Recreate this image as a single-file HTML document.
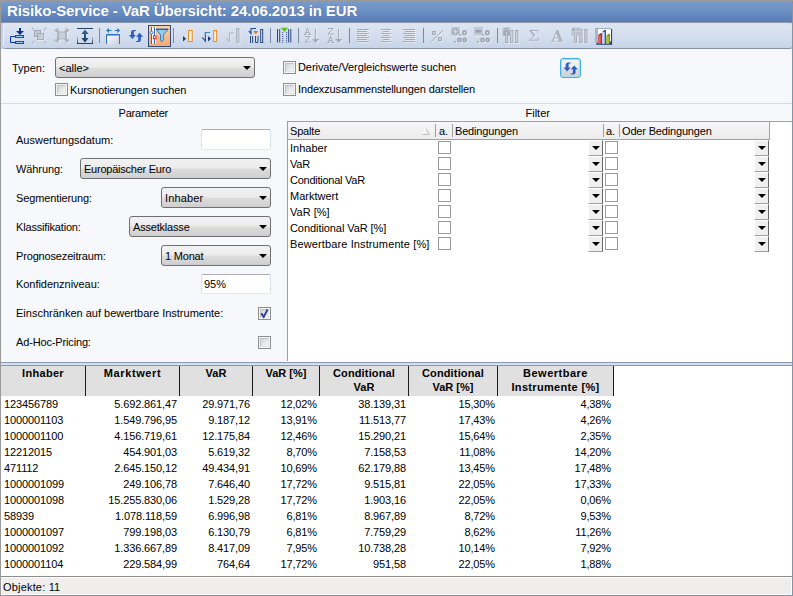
<!DOCTYPE html>
<html>
<head>
<meta charset="utf-8">
<title>Risiko-Service</title>
<style>
*{box-sizing:border-box;margin:0;padding:0}
html,body{width:793px;height:596px;overflow:hidden;background:#f6f8fc}
body{font-family:"Liberation Sans",sans-serif;font-size:11px;color:#000;position:relative}
.abs{position:absolute}
#frame{position:absolute;left:0;top:0;width:793px;height:596px;border-left:1px solid #9a9a9a;border-top:1px solid #9a9a9a}
#title{position:absolute;left:1px;top:1px;width:792px;height:21px;background:linear-gradient(#7b9ccb 0%,#6a8ec2 50%,#577db5 100%);color:#fff;font-weight:bold;font-size:15px;line-height:19px;padding-left:6px;white-space:nowrap;letter-spacing:-.12px;text-shadow:0 0 1px rgba(40,60,110,.5)}
#toolbar{position:absolute;left:1px;top:22px;width:791px;height:27px;background:#c3d0e6;border-top:1px solid #8d96a6}
#toolbar .bar{position:absolute;left:2px;top:0;width:789px;height:25px;border-radius:3px;background:linear-gradient(#dee5f1 0%,#d6dfee 45%,#c7d4e8 100%);border-left:1px solid #eef2f9;box-shadow:0 1px 0 #8591a6}
.lbl{position:absolute;white-space:nowrap;line-height:13px;height:13px}
.combo{position:absolute;height:21px;border:1px solid #707070;border-radius:3px;background:linear-gradient(#f2f2f2 0%,#ebebeb 48%,#dddddd 52%,#cfcfcf 100%);line-height:20px;padding-left:3px;white-space:nowrap}
.combo:after{content:"";position:absolute;right:3px;top:8px;border-left:4px solid transparent;border-right:4px solid transparent;border-top:4px solid #000}
.inp{position:absolute;height:20px;background:#fff;border:1px solid #dde2e9;border-top-color:#abadb3;border-bottom-color:#e3e9ef;border-radius:2px;line-height:18px;padding-left:2px}
.cb{position:absolute;width:13px;height:13px;border:1px solid #8e8f8f;background:#f4f4f4}
.cb i{position:absolute;left:1px;top:1px;width:9px;height:9px;border:1px solid;border-color:#c0c4c9 #e2e4e7 #e2e4e7 #c0c4c9;background:linear-gradient(135deg,#d2d5d9,#f6f6f6)}
.cb svg{position:absolute;left:-1px;top:-1px}
#sep1{position:absolute;left:1px;top:103px;width:792px;height:1px;background:#d5dae3}

#fgrid{position:absolute;left:287px;top:121px;width:506px;height:240px;background:#fff;border-left:1px solid #a0a0a0;border-top:1px solid #a0a0a0}
#fhead{position:absolute;left:0;top:0;width:482px;height:18px;background:linear-gradient(#f7f7f7,#ececec);border-bottom:1px solid #a0a0a0}
#fhead span{position:absolute;top:3px;line-height:13px;white-space:nowrap;letter-spacing:-.17px}
#fhead b{position:absolute;top:2px;width:1px;height:13px;background:#a0a0a0}
.frow{position:absolute;left:2px;white-space:nowrap;line-height:13px}
.gcb{position:absolute;width:13px;height:13px;border:1px solid #9b9b9b;background:#fff}
.dd{position:absolute;width:15px;height:16px;background:#f0f0f0;border-left:1px solid #fff;border-top:1px solid #fff;border-right:1px solid #696969;border-bottom:1px solid #a0a0a0}
.dd:after{content:"";position:absolute;left:3px;top:5px;border-left:4px solid transparent;border-right:4px solid transparent;border-top:4px solid #000}

#split{position:absolute;left:1px;top:361px;width:791px;height:5px;background:linear-gradient(#fff 0,#fff 1px,#8798b0 1px,#8798b0 2px,#d4e0ef 2px,#d4e0ef 4px,#8798b0 4px)}
#bgrid{position:absolute;left:1px;top:366px;width:791px;height:210px;background:#fff;font-size:11px}
#bhead{position:absolute;left:0;top:0;width:613px;height:30px;background:#e0e0e0}
#bhead div{position:absolute;top:0;height:30px;border-right:1px solid #1c1c1c;text-align:center;font-weight:bold;line-height:14px;padding-top:0}
.br{position:absolute;left:0;height:16px;line-height:16px;white-space:nowrap;letter-spacing:-.12px}
.br span{position:absolute;top:0;text-align:right;padding-right:3px}
.br span:first-child{text-align:left;padding-left:3px}
#gbot{position:absolute;left:1px;top:576px;width:791px;height:1px;background:#8c8c8c}
#status{position:absolute;left:1px;top:577px;width:791px;height:18px;background:#f0eeed;border:1px solid #fff;line-height:18px;padding-left:1px;letter-spacing:.18px}
#rb{position:absolute;left:792px;top:1px;width:1px;height:595px;background:#8593a9}
#bb{position:absolute;left:0;top:595px;width:793px;height:1px;background:#8593a9}
#rbtn{position:absolute;left:560px;top:58px;width:21px;height:20px;border:1px solid #3bb0e6;border-radius:3px;background:linear-gradient(#f4f4f4 0%,#ececec 48%,#dedede 52%,#d2d2d2 100%);box-shadow:inset 0 0 0 1px #a6def6}
</style>
</head>
<body>
<div id="frame"></div>
<div id="title">Risiko-Service - VaR Übersicht: 24.06.2013 in EUR</div>
<div id="toolbar"><div class="bar"></div></div>
<svg id="tb" class="abs" style="left:0;top:22px" width="793" height="27" viewBox="0 22 793 27">
<defs>
<linearGradient id="gOr" x1="0" y1="0" x2="0" y2="1"><stop offset="0" stop-color="#fbd3ad"/><stop offset="1" stop-color="#f0a871"/></linearGradient>
<linearGradient id="gBox" x1="0" y1="0" x2="1" y2="1"><stop offset="0" stop-color="#ffffff"/><stop offset="1" stop-color="#c9cedd"/></linearGradient>
<linearGradient id="gNavy" x1="0" y1="0" x2="0" y2="1"><stop offset="0" stop-color="#3a6a9c"/><stop offset="1" stop-color="#173763"/></linearGradient>
<linearGradient id="gSide" x1="0" y1="0" x2="0" y2="1"><stop offset="0" stop-color="#23416d" stop-opacity="0"/><stop offset="1" stop-color="#23416d"/></linearGradient>
<filter id="emb" x="-20%" y="-20%" width="150%" height="150%"><feOffset in="SourceAlpha" dx="1" dy="1" result="o"/><feFlood flood-color="#ffffff" flood-opacity=".4"/><feComposite in2="o" operator="in" result="sh"/><feMerge><feMergeNode in="sh"/><feMergeNode in="SourceGraphic"/></feMerge></filter>
</defs>
<g shape-rendering="crispEdges" fill="#7887a3">
<rect x="99" y="28" width="1" height="15"/><rect x="173" y="28" width="1" height="15"/><rect x="270" y="28" width="1" height="15"/><rect x="298" y="28" width="1" height="15"/><rect x="349" y="28" width="1" height="15"/><rect x="423" y="28" width="1" height="15"/><rect x="497" y="28" width="1" height="15"/>
</g>

<!-- 1: insert below -->
<g>
<path d="M19 28 H21 V31 H24 L20 35 L16 31 H19 Z" fill="#0b2f9e"/>
<rect x="15.5" y="35.5" width="8" height="2" fill="#9ed2f8" stroke="#1146c8"/>
<rect x="15.5" y="41.5" width="8" height="2" fill="#9ed2f8" stroke="#1146c8"/>
<path d="M15 36.5 H10.5 V42.5 H15" fill="none" stroke="#0a32b4"/>
</g>

<!-- 2: disabled overlapping squares -->
<g stroke="#a0a8b6" fill="#c6ccd7" filter="url(#emb)">
<rect x="34.5" y="30.5" width="6" height="6"/>
<rect x="37.5" y="33.5" width="6" height="6" fill-opacity=".75"/>
<path d="M32 28 L34.3 30.3 M46 28 L43.7 30.3 M32 43.2 L34.3 41 M46 43.2 L43.7 41" fill="none" stroke-width="1.2" stroke-dasharray="1.5 .7"/>
</g>

<!-- 3: disabled expand -->
<g fill="#adb5c2" filter="url(#emb)">
<path d="M54 30.5 L58.5 27.8 V30 L60 31.5 H64 L65.5 30 V27.8 L70 30.5 L67 32.5 V38.5 L70 40.5 L65.5 43.2 V41 L64 39.5 H60 L58.5 41 V43.2 L54 40.5 L57 38.5 V32.5 Z"/>
<rect x="59" y="32.5" width="6" height="6" fill="#c9cfd9"/>
</g>

<!-- 4: vertical fit -->
<g>
<rect x="77" y="28" width="16" height="1" fill="#23416d" shape-rendering="crispEdges"/>
<rect x="77" y="43" width="16" height="1" fill="#23416d" shape-rendering="crispEdges"/>
<rect x="77" y="36" width="1" height="7" fill="url(#gSide)"/>
<rect x="92" y="36" width="1" height="7" fill="url(#gSide)"/>
<path d="M85 29.5 L88.6 34 H86 V38 H88.6 L85 42.5 L81.4 38 H84 V34 H81.4 Z" fill="url(#gNavy)"/>
</g>

<!-- 5: column width -->
<g>
<rect x="106.5" y="34.5" width="13" height="10" fill="url(#gBox)"/>
<path d="M106.5 44 V34.5 H119.5 V44" fill="none" stroke="#2b72c2"/>
<rect x="107" y="35" width="12" height="1" fill="#7db4ea"/>
<path d="M106 30.5 L109 28 V30 H111.5 V31 H109 V33 Z M120.2 30.5 L117.2 28 V30 H114.7 V31 H117.2 V33 Z" fill="#2b7acc"/>
</g>

<!-- 6: refresh -->
<g fill="#2b5fc7" stroke="none">
<path d="M136 30 H133.5 C131.8 30 131 31 131 32.5 V35 H128.9 L132.4 39 L135.9 35 H133.9 V32.5 C133.9 31.5 134.3 31 135 31 H136 Z"/>
<path d="M136 42 H138.5 C140.2 42 140.9 41 140.9 39.5 V36.7 H143.1 L139.5 32.8 L136 36.7 H138.2 V39.5 C138.2 40.5 137.8 41 137 41 H136 Z"/>
</g>

<!-- 7: filter (active) -->
<g>
<rect x="148.5" y="25.5" width="22" height="21" fill="url(#gOr)" stroke="#36497a"/>
<g shape-rendering="crispEdges"><rect x="152" y="27" width="1" height="17" fill="#fff"/>
<rect x="155" y="27" width="1" height="17" fill="#fff"/>
<rect x="153" y="27" width="1" height="17" fill="#fbe3cd"/>
<rect x="151" y="27" width="1" height="17" fill="#2a6cd4"/>
<rect x="154" y="27" width="1" height="17" fill="#2a6cd4"/></g>
<circle cx="151.5" cy="32.6" r="1.3" fill="#fff" stroke="#2a6cd4" stroke-width=".9"/>
<rect x="153.4" y="36" width="2.6" height="2.6" fill="#fff" stroke="#f01818" stroke-width=".9"/>
<path d="M156 29.3 H168.2 L163.4 34.8 V39.6 L161.8 41.8 L160.5 40 V34.8 Z" fill="#8fccf5" stroke="#2f74b8" stroke-width=".9" stroke-linejoin="round"/>
<path d="M156 29.3 H168.2" stroke="#2a5f9c" stroke-width="1.3"/>
</g>

<!-- 8: triangle + orange col -->
<g>
<path d="M183 36 V41.5 L186 38.75 Z" fill="#1f3870"/>
<rect x="188.6" y="30.5" width="3.6" height="11" fill="#fdf3e6" stroke="#e58a1c"/>
</g>

<!-- 9 -->
<g>
<path d="M202.3 37.3 L205.4 41.2 V32.5 H209.8" fill="none" stroke="#1f52ac" stroke-width="1.1"/>
<path d="M205.4 35 V32.5 H209.8" fill="none" stroke="#3b8ac8" stroke-width="1.1"/>
<path d="M208 36 V41.5 L211 38.75 Z" fill="#1f3870"/>
<rect x="213.7" y="30.5" width="3" height="11" fill="#fdf3e6" stroke="#e58a1c"/>
</g>

<!-- 10 disabled -->
<g fill="none" stroke="#a9b1be" filter="url(#emb)">
<path d="M226.3 37.8 L229.4 42 V33 H234"/>
<rect x="236.6" y="28.5" width="2.4" height="14" fill="#ccd3de"/>
</g>

<!-- 11 -->
<g>
<path d="M248.8 30.8 L251 33.6 V28.5 H256" fill="none" stroke="#1a46b0" stroke-width="1.1"/>
<path d="M253.2 31 H258.2 L255.7 34.2 Z" fill="#e07616"/>
<g stroke="#2a4680" fill="none">
<path d="M250.5 36 V43 M252.6 36 V43 M255.5 36 V42.5 H258 V36"/>
<rect x="260.7" y="29.5" width="2" height="13" fill="#dbe6f5"/>
</g>
</g>

<!-- 12 -->
<g stroke="#2a4680" fill="none">
<path d="M277.5 29 V42.5 M279.7 29 V42.5 M288.7 29 V42.5 M290.8 29 V42.5"/>
<path d="M282.7 32 V43 M286.6 32 V43" stroke-dasharray="1 1.05"/>
<path d="M280.6 27.8 H288.4 L284.5 32 Z" fill="#5cc41e" stroke="none"/>
</g>

<!-- 13 A-Z -->
<g fill="none" stroke="#a2aab8" filter="url(#emb)">
<path d="M307.5 28 L305.2 34.4 M307.5 28 L309.8 34.4 M306 32.5 H309 M304 34.5 H306.6 M308.4 34.5 H311"/>
<path d="M305 36.5 H310 L305 42 H310.2"/>
<path d="M315.5 29 V40" shape-rendering="crispEdges"/>
<path d="M312.2 39 H319 L315.6 42.9 Z" fill="#a2aab8" stroke="none"/>
</g>
<!-- 14 Z-A -->
<g fill="none" stroke="#a2aab8" filter="url(#emb)">
<path d="M328 28.5 H333.2 L328 34 H333.4"/>
<path d="M330.7 36.2 L328.4 42.4 M330.7 36.2 L333 42.4 M329.2 40.5 H332.2 M327.2 42.5 H329.8 M331.6 42.5 H334.2"/>
<path d="M338.5 29 V40" shape-rendering="crispEdges"/>
<path d="M335.2 39 H342.2 L338.7 42.9 Z" fill="#a2aab8" stroke="none"/>
</g>

<!-- 15-17 align -->
<g fill="#a2aab8" shape-rendering="crispEdges" filter="url(#emb)">
<rect x="357" y="29" width="12" height="1"/><rect x="357" y="31" width="10" height="1"/><rect x="357" y="33" width="12" height="1"/><rect x="357" y="35" width="10" height="1"/><rect x="357" y="37" width="12" height="1"/><rect x="357" y="39" width="10" height="1"/><rect x="357" y="41" width="12" height="1"/>
<rect x="381" y="29" width="10" height="1"/><rect x="383" y="31" width="6" height="1"/><rect x="381" y="33" width="10" height="1"/><rect x="383" y="35" width="6" height="1"/><rect x="381" y="37" width="10" height="1"/><rect x="383" y="39" width="6" height="1"/><rect x="381" y="41" width="10" height="1"/>
<rect x="403" y="29" width="12" height="1"/><rect x="405" y="31" width="10" height="1"/><rect x="403" y="33" width="12" height="1"/><rect x="405" y="35" width="10" height="1"/><rect x="403" y="37" width="12" height="1"/><rect x="405" y="39" width="10" height="1"/><rect x="403" y="41" width="12" height="1"/>
</g>

<!-- 18 % -->
<g stroke="#a2aab8" fill="#cfd5df" filter="url(#emb)">
<path d="M431 41.8 L443.3 30"/>
<rect x="432.5" y="31.5" width="3" height="3"/><rect x="438.5" y="37.5" width="3" height="3"/>
</g>

<!-- 19, 20 decimals -->
<g filter="url(#emb)">
<rect x="451" y="27" width="9" height="8.5" fill="#c2c8d2"/>
<g fill="none" stroke="#a0a8b6" stroke-width="1.9">
<rect x="462.85" y="30.95" width="3.1" height="3.6" rx="1.4"/>
<rect x="458.1" y="38.5" width="2.9" height="3.1" rx="1.3"/>
<rect x="463.3" y="38.5" width="2.8" height="3.1" rx="1.3"/>
</g>
<rect x="459.5" y="34" width="1.7" height="1.6" fill="#9aa3b2"/>
<rect x="454.2" y="41" width="1.7" height="1.6" fill="#9aa3b2"/>
<path d="M454.3 28.5 H456.7 V30.4 H458.6 V32.8 H456.7 V34.6 H454.3 V32.8 H452.4 V30.4 H454.3 Z" fill="#d0d5df" stroke="#9aa3b2" stroke-width="1"/>
<rect x="474" y="27" width="9" height="8.5" fill="#c2c8d2"/>
<g fill="none" stroke="#a0a8b6" stroke-width="1.9">
<rect x="485.85" y="30.95" width="3.1" height="3.6" rx="1.4"/>
<rect x="481.1" y="38.5" width="2.9" height="3.1" rx="1.3"/>
<rect x="486.3" y="38.5" width="2.8" height="3.1" rx="1.3"/>
</g>
<rect x="482.5" y="34" width="1.7" height="1.6" fill="#9aa3b2"/>
<rect x="477.2" y="41" width="1.7" height="1.6" fill="#9aa3b2"/>
<rect x="475.5" y="30" width="6" height="2.6" fill="#9aa3b2"/>
</g>

<!-- 21 lock columns -->
<g stroke="#a2aab8" fill="#d0d6e0" filter="url(#emb)">
<rect x="505.7" y="36" width="2" height="6.5"/><rect x="510.6" y="30.5" width="2.3" height="12"/><rect x="515.6" y="30.5" width="2.3" height="12"/>
<rect x="502.3" y="27.3" width="8.4" height="9.1" fill="#c5cbd6" stroke="none"/>
<rect x="503.2" y="30.6" width="6.6" height="5" rx="1.2" fill="#a2aab8" stroke="none"/>
<path d="M504.8 31 V29.8 A1.7 1.7 0 0 1 508.2 29.8 V31" fill="none" stroke="#a2aab8" stroke-width="1.3"/>
<rect x="506" y="32" width="1" height="2.4" fill="#d3d8e1" stroke="none"/>
</g>

<!-- 22 sigma -->
<g filter="url(#emb)" fill="none" stroke="#a6aebb">
<path d="M538 32.6 V30.5 H529.8 M529.4 40.2 H538.2 V38"/>
<path d="M529.8 30.5 L534.6 35.6" stroke-width="1.7"/>
<path d="M534.6 35.6 L529.6 40.2" stroke-width=".9"/>
</g>
<!-- 23 A -->
<path filter="url(#emb)" fill="#adb4c0" fill-rule="evenodd" d="M556.5 30 L558.3 30 L562.5 40.5 L563.4 41 V41.8 H557.4 V41 L558.9 40.6 L558.1 38.3 H554.2 L553.5 40.5 L554.9 41 V41.8 H551 V41 L552.1 40.5 Z M554.6 37.3 H557.7 L556.1 33.3 Z"/>

<!-- 24 table columns -->
<g stroke="#a2aab8" fill="#d0d6e0" filter="url(#emb)">
<rect x="574.6" y="35.8" width="2" height="6.5"/><rect x="579.8" y="29.5" width="2.3" height="13"/><rect x="584.8" y="29.5" width="2.3" height="13"/>
<rect x="571.5" y="27.5" width="9.5" height="8.4" fill="#bcc3ce" stroke="none"/>
<rect x="572.5" y="28.5" width="2.6" height="2.4" fill="#a2aab8" stroke="none"/>
<path d="M571.5 31.5 H581 M575.6 27.5 V35.9" stroke="#cdd3dd" stroke-width=".8" fill="none"/>
</g>

<!-- 25 chart -->
<g>
<rect x="597.9" y="29" width="13.2" height="13.5" fill="#fff"/>
<rect x="595" y="28" width="2.9" height="15" fill="#a7b4c9"/>
<rect x="595" y="28" width="16.2" height="1" fill="#9eacc3"/>
<rect x="611" y="29" width="1.1" height="15.6" fill="#2c4474"/>
<path d="M595.6 44.8 L598 42 L611 41.4 L612.1 44.8 Z" fill="#25406f"/>
<path d="M598 35.3 L600.4 33.2 H602 V43 L600.9 43.8 H598 Z" fill="#b02c2c"/>
<path d="M598 35.3 H600.9 V43.8 H598 Z" fill="#da6460"/>
<path d="M602.1 32 L604.4 30 H606 V43 L604.7 43.8 H602.1 Z" fill="#3a55c2"/>
<path d="M602.1 32 H604.7 V43.8 H602.1 Z" fill="#cbd3f4"/>
<path d="M606.1 36.1 L608.5 34 H610 V43 L608.8 43.8 H606.1 Z" fill="#7e9624"/>
<path d="M606.1 36.1 H608.8 V43.8 H606.1 Z" fill="#aac444"/>
</g>
</svg>


<!-- top filter row -->
<div class="lbl" style="left:12px;top:62px">Typen:</div>
<div class="combo" style="left:55px;top:57px;width:200px">&lt;alle&gt;</div>
<div class="cb" style="left:55px;top:83px"><i></i></div>
<div class="lbl" style="left:70px;top:84px;letter-spacing:-0.14px">Kursnotierungen suchen</div>
<div class="cb" style="left:283px;top:61px"><i></i></div>
<div class="lbl" style="left:298px;top:61px;letter-spacing:-0.07px">Derivate/Vergleichswerte suchen</div>
<div class="cb" style="left:283px;top:83px"><i></i></div>
<div class="lbl" style="left:298px;top:83px;letter-spacing:-0.135px">Indexzusammenstellungen darstellen</div>
<div id="rbtn"><svg width="19" height="18" viewBox="561 59 19 18" style="position:absolute;left:0;top:0"><g fill="#2b5fc7" transform="translate(434.7,32.6)">
<path d="M136 30 H133.5 C131.8 30 131 31 131 32.5 V35 H128.9 L132.4 39 L135.9 35 H133.9 V32.5 C133.9 31.5 134.3 31 135 31 H136 Z"/>
<path d="M136 42 H138.5 C140.2 42 140.9 41 140.9 39.5 V36.7 H143.1 L139.5 32.8 L136 36.7 H138.2 V39.5 C138.2 40.5 137.8 41 137 41 H136 Z"/>
</g></svg></div>
<div id="sep1"></div>

<!-- parameter panel -->
<div class="lbl" style="left:118.5px;top:107px;letter-spacing:-.2px">Parameter</div>
<div class="lbl" style="left:525.5px;top:107px">Filter</div>

<div class="lbl" style="left:16px;top:134px;letter-spacing:0px">Auswertungsdatum:</div>
<div class="inp" style="left:201px;top:129px;width:70px;height:21px"></div>

<div class="lbl" style="left:16px;top:163px;letter-spacing:-0.1px">Währung:</div>
<div class="combo" style="left:80px;top:158px;width:191px;letter-spacing:-0.24px">Europäischer Euro</div>

<div class="lbl" style="left:16px;top:192px;letter-spacing:-0.12px">Segmentierung:</div>
<div class="combo" style="left:161px;top:187px;width:110px;letter-spacing:.15px">Inhaber</div>

<div class="lbl" style="left:16px;top:221px;letter-spacing:-0.17px">Klassifikation:</div>
<div class="combo" style="left:129px;top:216px;width:142px;letter-spacing:-0.19px">Assetklasse</div>

<div class="lbl" style="left:16px;top:250px;letter-spacing:-0.16px">Prognosezeitraum:</div>
<div class="combo" style="left:161px;top:245px;width:110px;letter-spacing:-0.2px">1 Monat</div>

<div class="lbl" style="left:16px;top:278px;letter-spacing:-0.04px">Konfidenzniveau:</div>
<div class="inp" style="left:201px;top:274px;width:70px">95%</div>

<div class="lbl" style="left:16px;top:307px;letter-spacing:0px">Einschränken auf bewertbare Instrumente:</div>
<div class="cb chk" style="left:258px;top:307px"><i></i><svg width="13" height="13" viewBox="258 307 13 13"><path d="M261.3 313.4 L263.7 316.9 L267.6 309.5" fill="none" stroke="#2b3f91" stroke-width="1.9" stroke-linejoin="miter"/></svg></div>

<div class="lbl" style="left:16px;top:336px;letter-spacing:-0.15px">Ad-Hoc-Pricing:</div>
<div class="cb" style="left:258px;top:336px"><i></i></div>



<!-- filter grid -->
<div id="fgrid">
<div id="fhead">
<span style="left:2px">Spalte</span>
<svg class="abs" style="left:134px;top:6px" width="9" height="8" viewBox="0 0 9 8"><path d="M0.5 6.5 L4 0.5" fill="none" stroke="#fff" stroke-width="1"/><path d="M4 0.5 L7.5 6.5 H0.5" fill="none" stroke="#bdbdbd" stroke-width="1"/></svg>
<b style="left:147px"></b>
<span style="left:151px">a.</span>
<b style="left:164px"></b>
<span style="left:167px">Bedingungen</span>
<b style="left:315px"></b>
<span style="left:318px">a.</span>
<b style="left:331px"></b>
<span style="left:334px">Oder Bedingungen</span>
<b style="left:481px;top:0;height:18px"></b>
</div>
<div class="frow" style="top:20px">Inhaber</div><div class="gcb" style="left:150px;top:19px"></div><div class="dd" style="left:300px;top:18px"></div><div class="gcb" style="left:317px;top:19px"></div><div class="dd" style="left:466px;top:18px"></div>
<div class="frow" style="top:36px;letter-spacing:-0.15px">VaR</div><div class="gcb" style="left:150px;top:35px"></div><div class="dd" style="left:300px;top:34px"></div><div class="gcb" style="left:317px;top:35px"></div><div class="dd" style="left:466px;top:34px"></div>
<div class="frow" style="top:52px;letter-spacing:-0.25px">Conditional VaR</div><div class="gcb" style="left:150px;top:51px"></div><div class="dd" style="left:300px;top:50px"></div><div class="gcb" style="left:317px;top:51px"></div><div class="dd" style="left:466px;top:50px"></div>
<div class="frow" style="top:68px">Marktwert</div><div class="gcb" style="left:150px;top:67px"></div><div class="dd" style="left:300px;top:66px"></div><div class="gcb" style="left:317px;top:67px"></div><div class="dd" style="left:466px;top:66px"></div>
<div class="frow" style="top:84px">VaR [%]</div><div class="gcb" style="left:150px;top:83px"></div><div class="dd" style="left:300px;top:82px"></div><div class="gcb" style="left:317px;top:83px"></div><div class="dd" style="left:466px;top:82px"></div>
<div class="frow" style="top:100px;letter-spacing:-0.07px">Conditional VaR [%]</div><div class="gcb" style="left:150px;top:99px"></div><div class="dd" style="left:300px;top:98px"></div><div class="gcb" style="left:317px;top:99px"></div><div class="dd" style="left:466px;top:98px"></div>
<div class="frow" style="top:116px;letter-spacing:0.12px">Bewertbare Instrumente [%]</div><div class="gcb" style="left:150px;top:115px"></div><div class="dd" style="left:300px;top:114px"></div><div class="gcb" style="left:317px;top:115px"></div><div class="dd" style="left:466px;top:114px"></div>
</div>

<!-- bottom grid -->
<div id="split"></div>
<div id="bgrid">
<div id="bhead"><div style="left:0px;width:85px;letter-spacing:.3px">Inhaber</div><div style="left:85px;width:94px;letter-spacing:.6px">Marktwert</div><div style="left:179px;width:73px">VaR</div><div style="left:252px;width:67px">VaR [%]</div><div style="left:319px;width:89px" ><span style="letter-spacing:.15px">Conditional</span><br>VaR</div><div style="left:408px;width:89px"><span style="letter-spacing:.15px">Conditional</span><br>VaR [%]</div><div style="left:497px;width:116px"><span style="letter-spacing:.5px">Bewertbare</span><br><span style="letter-spacing:.33px">Instrumente [%]</span></div></div>
<div class="br" style="top:30px"><span style="left:0px;width:85px">123456789</span><span style="left:85px;width:94px">5.692.861,47</span><span style="left:179px;width:73px">29.971,76</span><span style="left:252px;width:67px">12,02%</span><span style="left:319px;width:89px">38.139,31</span><span style="left:408px;width:89px">15,30%</span><span style="left:497px;width:116px">4,38%</span></div>
<div class="br" style="top:46px"><span style="left:0px;width:85px">1000001103</span><span style="left:85px;width:94px">1.549.796,95</span><span style="left:179px;width:73px">9.187,12</span><span style="left:252px;width:67px">13,91%</span><span style="left:319px;width:89px">11.513,77</span><span style="left:408px;width:89px">17,43%</span><span style="left:497px;width:116px">4,26%</span></div>
<div class="br" style="top:62px"><span style="left:0px;width:85px">1000001100</span><span style="left:85px;width:94px">4.156.719,61</span><span style="left:179px;width:73px">12.175,84</span><span style="left:252px;width:67px">12,46%</span><span style="left:319px;width:89px">15.290,21</span><span style="left:408px;width:89px">15,64%</span><span style="left:497px;width:116px">2,35%</span></div>
<div class="br" style="top:78px"><span style="left:0px;width:85px">12212015</span><span style="left:85px;width:94px">454.901,03</span><span style="left:179px;width:73px">5.619,32</span><span style="left:252px;width:67px">8,70%</span><span style="left:319px;width:89px">7.158,53</span><span style="left:408px;width:89px">11,08%</span><span style="left:497px;width:116px">14,20%</span></div>
<div class="br" style="top:94px"><span style="left:0px;width:85px">471112</span><span style="left:85px;width:94px">2.645.150,12</span><span style="left:179px;width:73px">49.434,91</span><span style="left:252px;width:67px">10,69%</span><span style="left:319px;width:89px">62.179,88</span><span style="left:408px;width:89px">13,45%</span><span style="left:497px;width:116px">17,48%</span></div>
<div class="br" style="top:110px"><span style="left:0px;width:85px">1000001099</span><span style="left:85px;width:94px">249.106,78</span><span style="left:179px;width:73px">7.646,40</span><span style="left:252px;width:67px">17,72%</span><span style="left:319px;width:89px">9.515,81</span><span style="left:408px;width:89px">22,05%</span><span style="left:497px;width:116px">17,33%</span></div>
<div class="br" style="top:126px"><span style="left:0px;width:85px">1000001098</span><span style="left:85px;width:94px">15.255.830,06</span><span style="left:179px;width:73px">1.529,28</span><span style="left:252px;width:67px">17,72%</span><span style="left:319px;width:89px">1.903,16</span><span style="left:408px;width:89px">22,05%</span><span style="left:497px;width:116px">0,06%</span></div>
<div class="br" style="top:142px"><span style="left:0px;width:85px">58939</span><span style="left:85px;width:94px">1.078.118,59</span><span style="left:179px;width:73px">6.996,98</span><span style="left:252px;width:67px">6,81%</span><span style="left:319px;width:89px">8.967,89</span><span style="left:408px;width:89px">8,72%</span><span style="left:497px;width:116px">9,53%</span></div>
<div class="br" style="top:158px"><span style="left:0px;width:85px">1000001097</span><span style="left:85px;width:94px">799.198,03</span><span style="left:179px;width:73px">6.130,79</span><span style="left:252px;width:67px">6,81%</span><span style="left:319px;width:89px">7.759,29</span><span style="left:408px;width:89px">8,62%</span><span style="left:497px;width:116px">11,26%</span></div>
<div class="br" style="top:174px"><span style="left:0px;width:85px">1000001092</span><span style="left:85px;width:94px">1.336.667,89</span><span style="left:179px;width:73px">8.417,09</span><span style="left:252px;width:67px">7,95%</span><span style="left:319px;width:89px">10.738,28</span><span style="left:408px;width:89px">10,14%</span><span style="left:497px;width:116px">7,92%</span></div>
<div class="br" style="top:190px"><span style="left:0px;width:85px">1000001104</span><span style="left:85px;width:94px">229.584,99</span><span style="left:179px;width:73px">764,64</span><span style="left:252px;width:67px">17,72%</span><span style="left:319px;width:89px">951,58</span><span style="left:408px;width:89px">22,05%</span><span style="left:497px;width:116px">1,88%</span></div>
</div>
<div id="gbot"></div>
<div id="status">Objekte: 11</div>
<div id="rb"></div><div id="bb"></div>
</body>
</html>
